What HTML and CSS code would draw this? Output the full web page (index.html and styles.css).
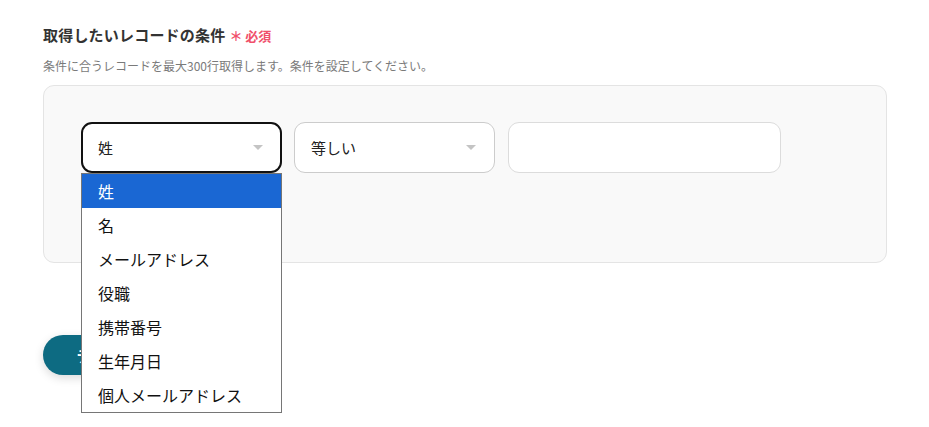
FILE: index.html
```html
<!DOCTYPE html>
<html lang="ja">
<head>
<meta charset="utf-8">
<link rel="stylesheet" href="styles.css">
</head>
<body>
<div class="page">
  <div class="label">
    <span class="label-text">取得したいレコードの条件</span>
    <span class="required">＊ 必須</span>
  </div>
  <p class="hint">条件に合うレコードを最大300行取得します。条件を設定してください。</p>
  <div class="panel">
    <div class="row">
      <div class="field">
        <div class="select focused">
          <span>姓</span>
          <span class="caret"></span>
        </div>
        <ul class="menu">
          <li class="active">姓</li>
          <li>名</li>
          <li>メールアドレス</li>
          <li>役職</li>
          <li>携帯番号</li>
          <li>生年月日</li>
          <li>個人メールアドレス</li>
        </ul>
      </div>
      <div class="select">
        <span>等しい</span>
        <span class="caret"></span>
      </div>
      <div class="input"></div>
    </div>
  </div>
  <div class="actions">
    <button class="btn">テスト</button>
  </div>
</div>
</body>
</html>
```
FILE: styles.css
```css
* { box-sizing: border-box; }
html, body { margin: 0; padding: 0; background: #fff; }
body {
  font-family: "Noto Sans CJK JP", "Noto Sans", sans-serif;
  color: #222;
}
.page {
  padding: 24px 42px 0 43px;
  min-height: 427px;
}
.label {
  display: flex;
  align-items: baseline;
  gap: 4px;
  height: 22px;
}
.label-text {
  font-size: 15px;
  font-weight: 700;
  color: #333;
  letter-spacing: 0.2px;
}
.required {
  font-size: 13px;
  font-weight: 700;
  color: #f0506a;
}
.hint {
  margin: 11px 0 0;
  font-size: 12px;
  color: #7a7a7a;
  line-height: 18px;
}
.panel {
  margin-top: 10px;
  height: 178px;
  background: #f9f9f9;
  border: 1px solid #e4e4e4;
  border-radius: 11px;
  padding: 36px 37px;
}
.row {
  display: flex;
  gap: 12px;
}
.field {
  position: relative;
  z-index: 5;
}
.select {
  width: 201px;
  height: 51px;
  background: #fff;
  border: 1px solid #cccccc;
  border-radius: 11px;
  padding: 0 16px;
  display: flex;
  align-items: center;
  justify-content: space-between;
  font-size: 15px;
  color: #222;
}
.select.focused {
  border: 2px solid #111;
  padding: 0 15px;
}
.caret {
  width: 0;
  height: 0;
  border-left: 5px solid transparent;
  border-right: 5px solid transparent;
  border-top: 5px solid #c4c4c4;
  margin-right: 2px;
}
.input {
  margin-left: 1px;
  width: 273px;
  height: 51px;
  background: #fff;
  border: 1px solid #dcdcdc;
  border-radius: 11px;
}
.menu {
  position: absolute;
  left: 0;
  top: 51px;
  width: 201px;
  margin: 0;
  padding: 0;
  list-style: none;
  background: #fff;
  border: 1px solid #767676;
  z-index: 10;
}
.menu li {
  height: 34px;
  line-height: 34px;
  padding-left: 16px;
  font-size: 16px;
  color: #111;
}
.menu li.active {
  background: #1a67d3;
  color: #fff;
}
.actions {
  margin-top: 72px;
}
.btn {
  width: 112px;
  height: 40px;
  border: none;
  border-radius: 20px;
  background: #0d6b82;
  color: #fff;
  font-family: inherit;
  font-size: 15px;
  font-weight: 700;
  box-shadow: 0 3px 10px rgba(0, 0, 0, 0.15);
}
```
